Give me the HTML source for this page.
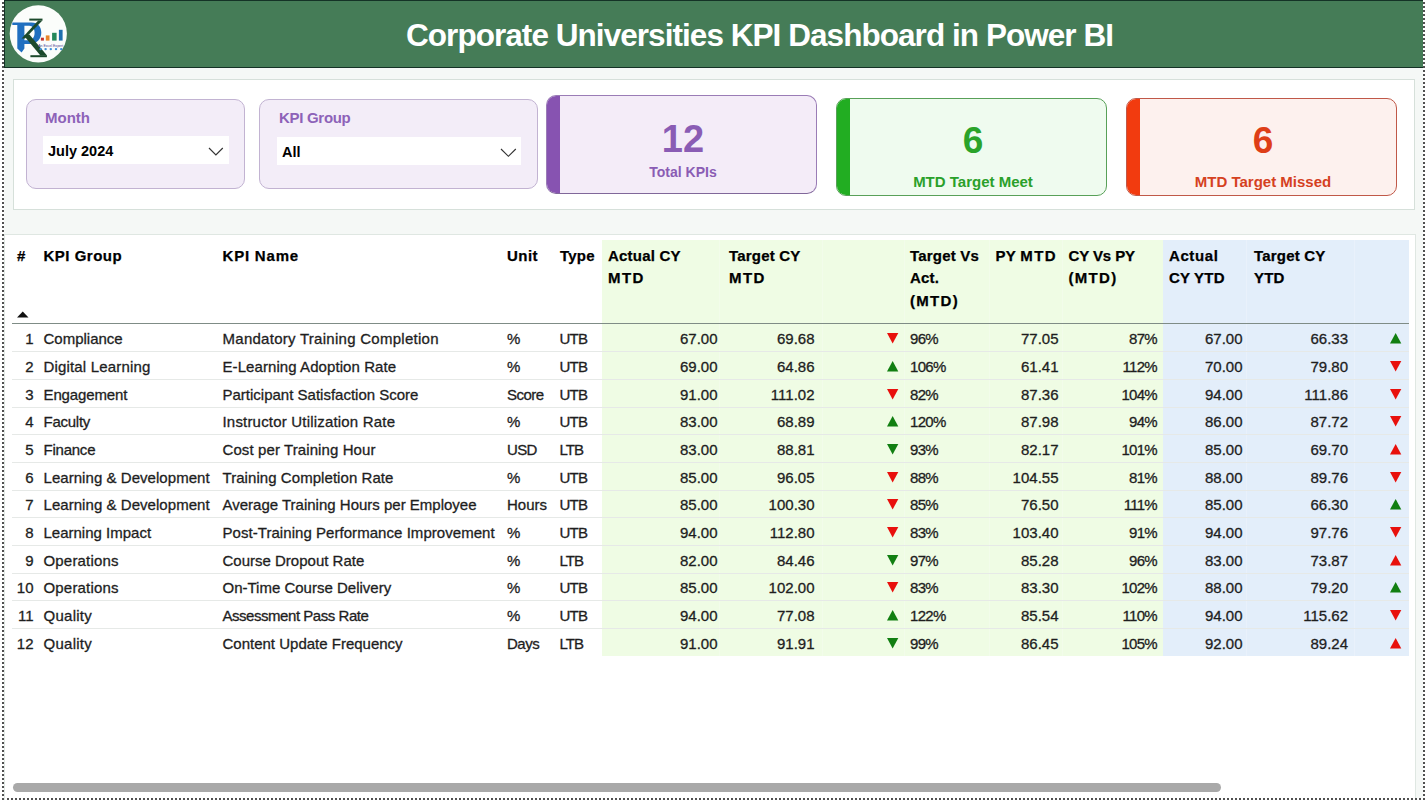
<!DOCTYPE html>
<html><head><meta charset="utf-8">
<style>
*{box-sizing:border-box;margin:0;padding:0}
html,body{width:1425px;height:802px;overflow:hidden;background:#fff}
body{position:relative;font-family:"Liberation Sans",sans-serif;color:#222}
.abs{position:absolute}
#dotL{left:2px;top:0;width:2px;height:800px;background:repeating-linear-gradient(to bottom,transparent 0 2px,#505050 2px 4px)}
#dotR{left:1423px;top:0;width:2px;height:800px;background:repeating-linear-gradient(to bottom,transparent 0 2px,#505050 2px 4px)}
#dotB{left:7px;top:798px;width:1416px;height:2px;background:repeating-linear-gradient(to right,#505050 0 2px,transparent 2px 4px)}
#bg{left:4px;top:67px;width:1419px;height:731px;background:#f5f8f6}
#hdr{left:4px;top:0;width:1419px;height:68px;background:#457c57;border-top:1px solid #143226;border-left:1px solid #143226;border-bottom:1px solid #143226}
#title{left:406px;top:15.2px;letter-spacing:-0.95px;color:#fff;font-weight:700;font-size:31.5px;line-height:40px;white-space:nowrap}
#logo{left:9px;top:5px;width:58px;height:58px;border-radius:50%;background:#fff}
#p1{left:13px;top:79px;width:1402px;height:131px;background:#fff;border:1px solid #d6e0da}
.sl{border:1px solid #c2b3d2;background:#f3edf8;border-radius:10px}
.slt{color:#8d62b8;font-weight:700;font-size:15px;white-space:nowrap}
.slb{background:#fff}
.slv{color:#000;font-weight:700;font-size:14.5px;white-space:nowrap}
.card{border-radius:10px;overflow:hidden}
.card .bar{position:absolute;left:0;top:0;bottom:0;width:13px}
.cn{position:absolute;left:3px;right:0;text-align:center;font-weight:700;white-space:nowrap}
#p2{left:4px;top:234px;width:1412px;height:566px;background:#fff;border:1px solid #dfe7e2;border-bottom:none}
#gband{left:602px;top:240px;width:561px;height:416px;background:#effce4}
#bband{left:1163px;top:240px;width:246px;height:416px;background:#e3eefa}
.th{position:absolute;font-weight:700;font-size:15px;letter-spacing:0.2px;line-height:22.5px;color:#000;-webkit-text-stroke:0.25px #000;white-space:nowrap}
.td{position:absolute;font-size:15px;line-height:20px;color:#1e1e1e;-webkit-text-stroke:0.3px #1e1e1e;white-space:nowrap}
.r{text-align:right}
.hl{position:absolute;left:12px;width:1397px;height:1px;background:#e6e9e7}
#scroll{left:13px;top:783px;width:1208px;height:9px;border-radius:5px;background:#a9a9a9}
</style></head><body>
<div id="bg" class="abs"></div>
<div id="hdr" class="abs"></div>
<div id="title" class="abs">Corporate Universities KPI Dashboard in Power BI</div>
<svg class="abs" style="left:8px;top:4px" width="60" height="60" viewBox="8 4 60 60">
<circle cx="38.3" cy="33.8" r="28.6" fill="#fbfdfb"/>
<path fill-rule="evenodd" fill="#1f6fc0" d="M12.3,22.5 L31.5,22.5 C38.2,22.5 41.3,26.8 41.3,32.8 C41.3,39 36.6,44 30,44 L24.4,44 L24.4,48.5 L21.6,52.4 L17.3,48.5 L17.3,25 L12.3,25 Z M24.4,25.8 L29.2,25.8 C32.8,25.8 34.6,28.8 34.6,32.8 C34.6,37 32.4,40.3 28.8,40.3 L24.4,40.3 Z"/>
<rect x="29.3" y="18.6" width="13.2" height="2" fill="#1c4a2c"/>
<polygon points="38.2,20.4 42.4,20.4 25,38.4 21.6,38.4" fill="#1c4a2c"/>
<polygon points="23.8,35.6 29.4,34.6 47,55.4 40.4,55.6" fill="#1c4a2c"/>
<rect x="30.4" y="55.2" width="16.5" height="2" fill="#1c4a2c"/>
<rect x="40.9" y="37.7" width="3" height="2.9" fill="#c4302b"/>
<rect x="45.8" y="35.4" width="3.7" height="5.2" fill="#e8862a"/>
<rect x="52.1" y="32.8" width="4.5" height="7.8" fill="#23875a"/>
<rect x="58.9" y="29.8" width="3.7" height="10.8" fill="#1f6fae"/>
<text x="38.2" y="46.6" font-size="3.9" font-family="Liberation Sans" fill="#4a3f8f" textLength="25" lengthAdjust="spacingAndGlyphs">An Excel Expert</text>
<g fill="#3d8fd6"><circle cx="40.6" cy="49.1" r="1.2"/><circle cx="45.6" cy="49.1" r="1.2"/><circle cx="50.8" cy="49.1" r="1.2"/><circle cx="56" cy="49.1" r="1.2"/><circle cx="61.2" cy="49.1" r="1.2"/></g>
</svg>
<div id="p1" class="abs"></div>

<div class="abs sl" style="left:26px;top:99px;width:219px;height:90px"></div>
<div class="abs slt" style="left:45px;top:108.5px">Month</div>
<div class="abs slb" style="left:43px;top:136px;width:186px;height:28px"></div>
<div class="abs slv" style="left:48px;top:143px">July 2024</div>
<svg class="abs" style="left:208px;top:147px" width="16" height="10"><polyline points="1,1 7.9,8 14.8,1" fill="none" stroke="#333" stroke-width="1.15"/></svg>

<div class="abs sl" style="left:259px;top:99px;width:279px;height:90px"></div>
<div class="abs slt" style="left:279px;top:108.5px;letter-spacing:-0.3px">KPI Group</div>
<div class="abs slb" style="left:277px;top:137px;width:244px;height:28px"></div>
<div class="abs slv" style="left:282px;top:144px">All</div>
<svg class="abs" style="left:500px;top:147.5px" width="17" height="10"><polyline points="1,1 8.4,8.3 15.8,1" fill="none" stroke="#333" stroke-width="1.15"/></svg>

<div class="abs card" style="left:546px;top:95px;width:271px;height:99px;background:#f4ecf8;border:1px solid #9a7cb6;border-bottom-color:#80679a">
 <div class="bar" style="background:#8753b1"></div>
 <div class="cn" style="top:23px;font-size:38px;line-height:40px;color:#8a5cb4">12</div>
 <div class="cn" style="top:67px;font-size:14px;line-height:18px;color:#8a5cb4">Total KPIs</div>
</div>
<div class="abs card" style="left:836px;top:98px;width:271px;height:98px;background:#effbef;border:1px solid #58a058">
 <div class="bar" style="background:#22ad22"></div>
 <div class="cn" style="top:22px;font-size:37px;line-height:40px;color:#2aa32a">6</div>
 <div class="cn" style="top:74px;font-size:15px;line-height:18px;color:#2aa02a">MTD Target Meet</div>
</div>
<div class="abs card" style="left:1126px;top:98px;width:271px;height:98px;background:#fdf1ee;border:1px solid #c05848">
 <div class="bar" style="background:#f23b0f"></div>
 <div class="cn" style="top:22px;font-size:37px;line-height:40px;color:#de3e17">6</div>
 <div class="cn" style="top:74px;font-size:15px;line-height:18px;color:#d5411f">MTD Target Missed</div>
</div>

<div id="p2" class="abs"></div>
<div id="gband" class="abs"></div>
<div id="bband" class="abs"></div>
<div class="abs" style="left:719px;top:240px;width:1px;height:416px;background:rgba(255,255,255,0.22)"></div><div class="abs" style="left:822px;top:240px;width:1px;height:416px;background:rgba(255,255,255,0.22)"></div><div class="abs" style="left:904px;top:240px;width:1px;height:416px;background:rgba(255,255,255,0.22)"></div><div class="abs" style="left:989px;top:240px;width:1px;height:416px;background:rgba(255,255,255,0.22)"></div><div class="abs" style="left:1062px;top:240px;width:1px;height:416px;background:rgba(255,255,255,0.22)"></div><div class="abs" style="left:1246px;top:240px;width:1px;height:416px;background:rgba(255,255,255,0.22)"></div><div class="abs" style="left:1354px;top:240px;width:1px;height:416px;background:rgba(255,255,255,0.22)"></div>

<div class="th" style="left:17px;top:244.6px">#</div>
<div class="th" style="left:43.5px;top:244.6px"><span style="letter-spacing:0.5px">KPI Group</span></div>
<div class="th" style="left:222.5px;top:244.6px"><span style="letter-spacing:0.8px">KPI Name</span></div>
<div class="th" style="left:507px;top:244.6px"><span style="letter-spacing:0.45px">Unit</span></div>
<div class="th" style="left:560px;top:244.6px">Type</div>
<div class="th" style="left:608px;top:244.6px">Actual CY<br><span style="letter-spacing:1.4px">MTD</span></div>
<div class="th" style="left:729px;top:244.6px">Target CY<br><span style="letter-spacing:1.4px">MTD</span></div>
<div class="th" style="left:910px;top:244.6px">Target Vs<br>Act.<br><span style="letter-spacing:1.3px">(MTD)</span></div>
<div class="th" style="left:995.5px;top:244.6px"><span style="letter-spacing:0.3px">PY </span><span style="letter-spacing:1.4px">MTD</span></div>
<div class="th" style="left:1068.5px;top:244.6px"><span style="letter-spacing:-0.1px">CY Vs PY</span><br><span style="letter-spacing:1.3px">(MTD)</span></div>
<div class="th" style="left:1169px;top:244.6px"><span style="letter-spacing:0.6px">Actual</span><br>CY YTD</div>
<div class="th" style="left:1254px;top:244.6px">Target CY<br>YTD</div>
<svg class="abs" style="left:17px;top:310.6px" width="12" height="7"><polygon points="0,6.5 5.75,0.5 11.5,6.5" fill="#111"/></svg>
<div class="abs" style="left:12px;top:322.5px;width:1397px;height:1px;background:#7f8c86"></div>
<div class="td r" style="left:0;width:33.5px;top:329.2px">1</div>
<div class="td" style="left:43.5px;top:329.2px;">Compliance</div>
<div class="td" style="left:222.5px;top:329.2px;letter-spacing:0.27px;">Mandatory Training Completion</div>
<div class="td" style="left:507px;top:329.2px;">%</div>
<div class="td" style="left:559.5px;top:329.2px;letter-spacing:-0.8px;">UTB</div>
<div class="td r" style="left:617.5px;width:100px;top:329.2px">67.00</div>
<div class="td r" style="left:714.5px;width:100px;top:329.2px">69.68</div>
<div class="td r" style="left:958.5px;width:100px;top:329.2px">77.05</div>
<div class="td r" style="left:1142.5px;width:100px;top:329.2px">67.00</div>
<div class="td r" style="left:1248px;width:100px;top:329.2px">66.33</div>
<div class="td r" style="left:1057px;width:100px;top:329.2px;letter-spacing:-0.7px">87%</div>
<div class="td" style="left:910px;top:329.2px;letter-spacing:-0.7px">96%</div>
<svg class="abs" style="left:886.8px;top:333.4px" width="12" height="11"><polygon points="0,0 11.3,0 5.65,10.4" fill="#e8100c"/></svg>
<svg class="abs" style="left:1390.3px;top:333.4px" width="12" height="11"><polygon points="5.65,0 11.3,10.4 0,10.4" fill="#117f11"/></svg>
<div class="hl" style="top:351.4px"></div>
<div class="td r" style="left:0;width:33.5px;top:356.9px">2</div>
<div class="td" style="left:43.5px;top:356.9px;letter-spacing:0.17px;">Digital Learning</div>
<div class="td" style="left:222.5px;top:356.9px;letter-spacing:0.08px;">E-Learning Adoption Rate</div>
<div class="td" style="left:507px;top:356.9px;">%</div>
<div class="td" style="left:559.5px;top:356.9px;letter-spacing:-0.8px;">UTB</div>
<div class="td r" style="left:617.5px;width:100px;top:356.9px">69.00</div>
<div class="td r" style="left:714.5px;width:100px;top:356.9px">64.86</div>
<div class="td r" style="left:958.5px;width:100px;top:356.9px">61.41</div>
<div class="td r" style="left:1142.5px;width:100px;top:356.9px">70.00</div>
<div class="td r" style="left:1248px;width:100px;top:356.9px">79.80</div>
<div class="td r" style="left:1057px;width:100px;top:356.9px;letter-spacing:-0.7px">112%</div>
<div class="td" style="left:910px;top:356.9px;letter-spacing:-0.7px">106%</div>
<svg class="abs" style="left:886.8px;top:361.1px" width="12" height="11"><polygon points="5.65,0 11.3,10.4 0,10.4" fill="#117f11"/></svg>
<svg class="abs" style="left:1390.3px;top:361.1px" width="12" height="11"><polygon points="0,0 11.3,0 5.65,10.4" fill="#e8100c"/></svg>
<div class="hl" style="top:379.1px"></div>
<div class="td r" style="left:0;width:33.5px;top:384.5px">3</div>
<div class="td" style="left:43.5px;top:384.5px;letter-spacing:-0.12px;">Engagement</div>
<div class="td" style="left:222.5px;top:384.5px;">Participant Satisfaction Score</div>
<div class="td" style="left:507px;top:384.5px;letter-spacing:-0.55px;">Score</div>
<div class="td" style="left:559.5px;top:384.5px;letter-spacing:-0.8px;">UTB</div>
<div class="td r" style="left:617.5px;width:100px;top:384.5px">91.00</div>
<div class="td r" style="left:714.5px;width:100px;top:384.5px">111.02</div>
<div class="td r" style="left:958.5px;width:100px;top:384.5px">87.36</div>
<div class="td r" style="left:1142.5px;width:100px;top:384.5px">94.00</div>
<div class="td r" style="left:1248px;width:100px;top:384.5px">111.86</div>
<div class="td r" style="left:1057px;width:100px;top:384.5px;letter-spacing:-0.7px">104%</div>
<div class="td" style="left:910px;top:384.5px;letter-spacing:-0.7px">82%</div>
<svg class="abs" style="left:886.8px;top:388.7px" width="12" height="11"><polygon points="0,0 11.3,0 5.65,10.4" fill="#e8100c"/></svg>
<svg class="abs" style="left:1390.3px;top:388.7px" width="12" height="11"><polygon points="0,0 11.3,0 5.65,10.4" fill="#e8100c"/></svg>
<div class="hl" style="top:406.7px"></div>
<div class="td r" style="left:0;width:33.5px;top:412.2px">4</div>
<div class="td" style="left:43.5px;top:412.2px;letter-spacing:-0.25px;">Faculty</div>
<div class="td" style="left:222.5px;top:412.2px;letter-spacing:0.19px;">Instructor Utilization Rate</div>
<div class="td" style="left:507px;top:412.2px;">%</div>
<div class="td" style="left:559.5px;top:412.2px;letter-spacing:-0.8px;">UTB</div>
<div class="td r" style="left:617.5px;width:100px;top:412.2px">83.00</div>
<div class="td r" style="left:714.5px;width:100px;top:412.2px">68.89</div>
<div class="td r" style="left:958.5px;width:100px;top:412.2px">87.98</div>
<div class="td r" style="left:1142.5px;width:100px;top:412.2px">86.00</div>
<div class="td r" style="left:1248px;width:100px;top:412.2px">87.72</div>
<div class="td r" style="left:1057px;width:100px;top:412.2px;letter-spacing:-0.7px">94%</div>
<div class="td" style="left:910px;top:412.2px;letter-spacing:-0.7px">120%</div>
<svg class="abs" style="left:886.8px;top:416.4px" width="12" height="11"><polygon points="5.65,0 11.3,10.4 0,10.4" fill="#117f11"/></svg>
<svg class="abs" style="left:1390.3px;top:416.4px" width="12" height="11"><polygon points="0,0 11.3,0 5.65,10.4" fill="#e8100c"/></svg>
<div class="hl" style="top:434.4px"></div>
<div class="td r" style="left:0;width:33.5px;top:439.8px">5</div>
<div class="td" style="left:43.5px;top:439.8px;letter-spacing:-0.23px;">Finance</div>
<div class="td" style="left:222.5px;top:439.8px;letter-spacing:0.1px;">Cost per Training Hour</div>
<div class="td" style="left:507px;top:439.8px;letter-spacing:-0.67px;">USD</div>
<div class="td" style="left:559.5px;top:439.8px;letter-spacing:-1.0px;">LTB</div>
<div class="td r" style="left:617.5px;width:100px;top:439.8px">83.00</div>
<div class="td r" style="left:714.5px;width:100px;top:439.8px">88.81</div>
<div class="td r" style="left:958.5px;width:100px;top:439.8px">82.17</div>
<div class="td r" style="left:1142.5px;width:100px;top:439.8px">85.00</div>
<div class="td r" style="left:1248px;width:100px;top:439.8px">69.70</div>
<div class="td r" style="left:1057px;width:100px;top:439.8px;letter-spacing:-0.7px">101%</div>
<div class="td" style="left:910px;top:439.8px;letter-spacing:-0.7px">93%</div>
<svg class="abs" style="left:886.8px;top:444.0px" width="12" height="11"><polygon points="0,0 11.3,0 5.65,10.4" fill="#117f11"/></svg>
<svg class="abs" style="left:1390.3px;top:444.0px" width="12" height="11"><polygon points="5.65,0 11.3,10.4 0,10.4" fill="#e8100c"/></svg>
<div class="hl" style="top:462.0px"></div>
<div class="td r" style="left:0;width:33.5px;top:467.5px">6</div>
<div class="td" style="left:43.5px;top:467.5px;letter-spacing:0.05px;">Learning &amp; Development</div>
<div class="td" style="left:222.5px;top:467.5px;letter-spacing:0.06px;">Training Completion Rate</div>
<div class="td" style="left:507px;top:467.5px;">%</div>
<div class="td" style="left:559.5px;top:467.5px;letter-spacing:-0.8px;">UTB</div>
<div class="td r" style="left:617.5px;width:100px;top:467.5px">85.00</div>
<div class="td r" style="left:714.5px;width:100px;top:467.5px">96.05</div>
<div class="td r" style="left:958.5px;width:100px;top:467.5px">104.55</div>
<div class="td r" style="left:1142.5px;width:100px;top:467.5px">88.00</div>
<div class="td r" style="left:1248px;width:100px;top:467.5px">89.76</div>
<div class="td r" style="left:1057px;width:100px;top:467.5px;letter-spacing:-0.7px">81%</div>
<div class="td" style="left:910px;top:467.5px;letter-spacing:-0.7px">88%</div>
<svg class="abs" style="left:886.8px;top:471.7px" width="12" height="11"><polygon points="0,0 11.3,0 5.65,10.4" fill="#e8100c"/></svg>
<svg class="abs" style="left:1390.3px;top:471.7px" width="12" height="11"><polygon points="0,0 11.3,0 5.65,10.4" fill="#e8100c"/></svg>
<div class="hl" style="top:489.7px"></div>
<div class="td r" style="left:0;width:33.5px;top:495.2px">7</div>
<div class="td" style="left:43.5px;top:495.2px;letter-spacing:0.05px;">Learning &amp; Development</div>
<div class="td" style="left:222.5px;top:495.2px;">Average Training Hours per Employee</div>
<div class="td" style="left:507px;top:495.2px;">Hours</div>
<div class="td" style="left:559.5px;top:495.2px;letter-spacing:-0.8px;">UTB</div>
<div class="td r" style="left:617.5px;width:100px;top:495.2px">85.00</div>
<div class="td r" style="left:714.5px;width:100px;top:495.2px">100.30</div>
<div class="td r" style="left:958.5px;width:100px;top:495.2px">76.50</div>
<div class="td r" style="left:1142.5px;width:100px;top:495.2px">85.00</div>
<div class="td r" style="left:1248px;width:100px;top:495.2px">66.30</div>
<div class="td r" style="left:1057px;width:100px;top:495.2px;letter-spacing:-0.7px">111%</div>
<div class="td" style="left:910px;top:495.2px;letter-spacing:-0.7px">85%</div>
<svg class="abs" style="left:886.8px;top:499.4px" width="12" height="11"><polygon points="0,0 11.3,0 5.65,10.4" fill="#e8100c"/></svg>
<svg class="abs" style="left:1390.3px;top:499.4px" width="12" height="11"><polygon points="5.65,0 11.3,10.4 0,10.4" fill="#117f11"/></svg>
<div class="hl" style="top:517.4px"></div>
<div class="td r" style="left:0;width:33.5px;top:522.8px">8</div>
<div class="td" style="left:43.5px;top:522.8px;">Learning Impact</div>
<div class="td" style="left:222.5px;top:522.8px;letter-spacing:0.05px;">Post-Training Performance Improvement</div>
<div class="td" style="left:507px;top:522.8px;">%</div>
<div class="td" style="left:559.5px;top:522.8px;letter-spacing:-0.8px;">UTB</div>
<div class="td r" style="left:617.5px;width:100px;top:522.8px">94.00</div>
<div class="td r" style="left:714.5px;width:100px;top:522.8px">112.80</div>
<div class="td r" style="left:958.5px;width:100px;top:522.8px">103.40</div>
<div class="td r" style="left:1142.5px;width:100px;top:522.8px">94.00</div>
<div class="td r" style="left:1248px;width:100px;top:522.8px">97.76</div>
<div class="td r" style="left:1057px;width:100px;top:522.8px;letter-spacing:-0.7px">91%</div>
<div class="td" style="left:910px;top:522.8px;letter-spacing:-0.7px">83%</div>
<svg class="abs" style="left:886.8px;top:527.0px" width="12" height="11"><polygon points="0,0 11.3,0 5.65,10.4" fill="#e8100c"/></svg>
<svg class="abs" style="left:1390.3px;top:527.0px" width="12" height="11"><polygon points="0,0 11.3,0 5.65,10.4" fill="#e8100c"/></svg>
<div class="hl" style="top:545.0px"></div>
<div class="td r" style="left:0;width:33.5px;top:550.5px">9</div>
<div class="td" style="left:43.5px;top:550.5px;letter-spacing:0.18px;">Operations</div>
<div class="td" style="left:222.5px;top:550.5px;">Course Dropout Rate</div>
<div class="td" style="left:507px;top:550.5px;">%</div>
<div class="td" style="left:559.5px;top:550.5px;letter-spacing:-1.0px;">LTB</div>
<div class="td r" style="left:617.5px;width:100px;top:550.5px">82.00</div>
<div class="td r" style="left:714.5px;width:100px;top:550.5px">84.46</div>
<div class="td r" style="left:958.5px;width:100px;top:550.5px">85.28</div>
<div class="td r" style="left:1142.5px;width:100px;top:550.5px">83.00</div>
<div class="td r" style="left:1248px;width:100px;top:550.5px">73.87</div>
<div class="td r" style="left:1057px;width:100px;top:550.5px;letter-spacing:-0.7px">96%</div>
<div class="td" style="left:910px;top:550.5px;letter-spacing:-0.7px">97%</div>
<svg class="abs" style="left:886.8px;top:554.7px" width="12" height="11"><polygon points="0,0 11.3,0 5.65,10.4" fill="#117f11"/></svg>
<svg class="abs" style="left:1390.3px;top:554.7px" width="12" height="11"><polygon points="5.65,0 11.3,10.4 0,10.4" fill="#e8100c"/></svg>
<div class="hl" style="top:572.7px"></div>
<div class="td r" style="left:0;width:33.5px;top:578.1px">10</div>
<div class="td" style="left:43.5px;top:578.1px;letter-spacing:0.18px;">Operations</div>
<div class="td" style="left:222.5px;top:578.1px;">On-Time Course Delivery</div>
<div class="td" style="left:507px;top:578.1px;">%</div>
<div class="td" style="left:559.5px;top:578.1px;letter-spacing:-0.8px;">UTB</div>
<div class="td r" style="left:617.5px;width:100px;top:578.1px">85.00</div>
<div class="td r" style="left:714.5px;width:100px;top:578.1px">102.00</div>
<div class="td r" style="left:958.5px;width:100px;top:578.1px">83.30</div>
<div class="td r" style="left:1142.5px;width:100px;top:578.1px">88.00</div>
<div class="td r" style="left:1248px;width:100px;top:578.1px">79.20</div>
<div class="td r" style="left:1057px;width:100px;top:578.1px;letter-spacing:-0.7px">102%</div>
<div class="td" style="left:910px;top:578.1px;letter-spacing:-0.7px">83%</div>
<svg class="abs" style="left:886.8px;top:582.3px" width="12" height="11"><polygon points="0,0 11.3,0 5.65,10.4" fill="#e8100c"/></svg>
<svg class="abs" style="left:1390.3px;top:582.3px" width="12" height="11"><polygon points="5.65,0 11.3,10.4 0,10.4" fill="#117f11"/></svg>
<div class="hl" style="top:600.3px"></div>
<div class="td r" style="left:0;width:33.5px;top:605.8px">11</div>
<div class="td" style="left:43.5px;top:605.8px;letter-spacing:0.27px;">Quality</div>
<div class="td" style="left:222.5px;top:605.8px;letter-spacing:-0.46px;">Assessment Pass Rate</div>
<div class="td" style="left:507px;top:605.8px;">%</div>
<div class="td" style="left:559.5px;top:605.8px;letter-spacing:-0.8px;">UTB</div>
<div class="td r" style="left:617.5px;width:100px;top:605.8px">94.00</div>
<div class="td r" style="left:714.5px;width:100px;top:605.8px">77.08</div>
<div class="td r" style="left:958.5px;width:100px;top:605.8px">85.54</div>
<div class="td r" style="left:1142.5px;width:100px;top:605.8px">94.00</div>
<div class="td r" style="left:1248px;width:100px;top:605.8px">115.62</div>
<div class="td r" style="left:1057px;width:100px;top:605.8px;letter-spacing:-0.7px">110%</div>
<div class="td" style="left:910px;top:605.8px;letter-spacing:-0.7px">122%</div>
<svg class="abs" style="left:886.8px;top:610.0px" width="12" height="11"><polygon points="5.65,0 11.3,10.4 0,10.4" fill="#117f11"/></svg>
<svg class="abs" style="left:1390.3px;top:610.0px" width="12" height="11"><polygon points="0,0 11.3,0 5.65,10.4" fill="#e8100c"/></svg>
<div class="hl" style="top:628.0px"></div>
<div class="td r" style="left:0;width:33.5px;top:633.5px">12</div>
<div class="td" style="left:43.5px;top:633.5px;letter-spacing:0.27px;">Quality</div>
<div class="td" style="left:222.5px;top:633.5px;">Content Update Frequency</div>
<div class="td" style="left:507px;top:633.5px;letter-spacing:-0.5px;">Days</div>
<div class="td" style="left:559.5px;top:633.5px;letter-spacing:-1.0px;">LTB</div>
<div class="td r" style="left:617.5px;width:100px;top:633.5px">91.00</div>
<div class="td r" style="left:714.5px;width:100px;top:633.5px">91.91</div>
<div class="td r" style="left:958.5px;width:100px;top:633.5px">86.45</div>
<div class="td r" style="left:1142.5px;width:100px;top:633.5px">92.00</div>
<div class="td r" style="left:1248px;width:100px;top:633.5px">89.24</div>
<div class="td r" style="left:1057px;width:100px;top:633.5px;letter-spacing:-0.7px">105%</div>
<div class="td" style="left:910px;top:633.5px;letter-spacing:-0.7px">99%</div>
<svg class="abs" style="left:886.8px;top:637.7px" width="12" height="11"><polygon points="0,0 11.3,0 5.65,10.4" fill="#117f11"/></svg>
<svg class="abs" style="left:1390.3px;top:637.7px" width="12" height="11"><polygon points="5.65,0 11.3,10.4 0,10.4" fill="#e8100c"/></svg>
<div id="scroll" class="abs"></div>
<div id="dotL" class="abs"></div>
<div id="dotR" class="abs"></div>
<div id="dotB" class="abs"></div>
</body></html>
